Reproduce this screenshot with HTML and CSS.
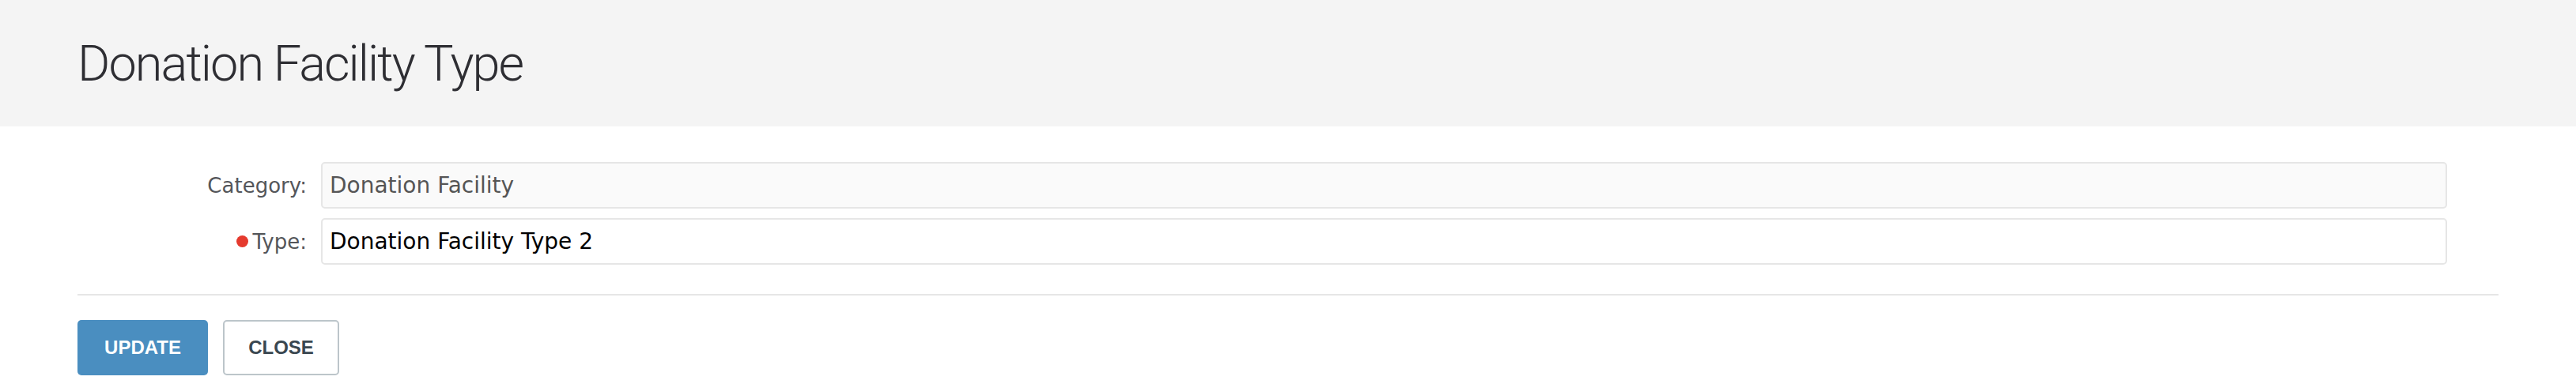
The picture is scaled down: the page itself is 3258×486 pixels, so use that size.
FILE: index.html
```html
<!DOCTYPE html>
<html lang="en">
<head>
  <meta charset="UTF-8" />
  <title>Donation Facility Type</title>
  <link rel="stylesheet" href="styles.css">
</head>
<body>
  <header class="page-header">
    <h1>Donation Facility Type</h1>
  </header>

  <form class="edit-form">
    <div class="field">
      <label for="category">Category:</label>
      <input type="text" id="category" class="input readonly" value="Donation Facility" readonly />
    </div>
    <div class="field">
      <label for="type"><span class="required"></span>Type:</label>
      <input type="text" id="type" class="input" value="Donation Facility Type 2" />
    </div>

    <div class="actions">
      <button type="button" class="btn btn-primary">UPDATE</button>
      <button type="button" class="btn btn-default">CLOSE</button>
    </div>
  </form>
</body>
</html>
```

FILE: styles.css
```css
:root {
  --header-bg: #f4f4f4;
  --border: #e6e6e6;
  --blue: #4a8ec0;
  --label: #54565a;
}

* {
  box-sizing: border-box;
  margin: 0;
  padding: 0;
}

body {
  font-family: 'DejaVu Sans', sans-serif;
  background: #fff;
  color: #000;
}

.page-header {
  background: var(--header-bg);
  height: 160px;
  display: flex;
  align-items: center;
  padding: 0 98px;
}

.page-header h1 {
  font-family: Roboto, 'Liberation Sans', sans-serif;
  font-weight: 300;
  font-size: 63px;
  color: #2e2e33;
  letter-spacing: -1.9px;
}

.edit-form {
  padding: 45px 98px 0;
}

.field {
  display: flex;
  align-items: center;
  gap: 18px;
  padding-right: 65px;
}

.field + .field {
  margin-top: 12px;
}

.field label {
  width: 290px;
  flex-shrink: 0;
  text-align: right;
  font-size: 26px;
  color: var(--label);
  display: flex;
  align-items: center;
  justify-content: flex-end;
}

.required {
  width: 15px;
  height: 15px;
  border-radius: 50%;
  background: #e53a2e;
  margin-right: 6px;
}

.input {
  flex: 1;
  height: 59px;
  border: 2px solid var(--border);
  border-radius: 5px;
  background: #fff;
  font-family: 'DejaVu Sans', sans-serif;
  font-size: 28px;
  color: #000;
  padding: 0 9px;
  outline: none;
}

.input.readonly {
  background: #fafafa;
  color: #555;
}

.actions {
  margin-top: 37px;
  border-top: 2px solid var(--border);
  padding-top: 31px;
  display: flex;
  gap: 19px;
}

.btn {
  height: 70px;
  border-radius: 5px;
  font-family: 'Liberation Sans', sans-serif;
  font-weight: 700;
  font-size: 24px;
  cursor: pointer;
}

.btn-primary {
  width: 165px;
  background: var(--blue);
  border: none;
  color: #fff;
}

.btn-default {
  width: 147px;
  background: #fff;
  border: 2px solid #bcc5ca;
  color: #3a4750;
}
```
